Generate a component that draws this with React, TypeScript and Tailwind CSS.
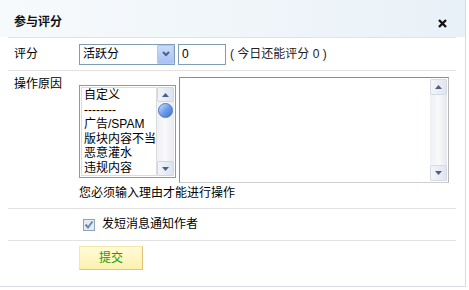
import React from "react";

const font = { fontFamily: '"Liberation Sans", "Noto Sans CJK SC", sans-serif' };

const reasons = ["自定义", "--------", "广告/SPAM", "版块内容不当", "恶意灌水", "违规内容"];

const ArrowUp = () => (
  <svg width="7" height="4" viewBox="0 0 7 4">
    <path d="M0 4 L3.5 0 L7 4 Z" fill="#4d6185" />
  </svg>
);

const ArrowDown = () => (
  <svg width="7" height="4" viewBox="0 0 7 4">
    <path d="M0 0 L3.5 4 L7 0 Z" fill="#4d6185" />
  </svg>
);

const App = () => {
  return (
    <div className="w-[469px] h-[290px] bg-white text-[12px] leading-[15px] text-black" style={font}>
      <div className="w-[466px] h-[287px] border-r border-b border-[#d3dbe4] flex flex-col">
        {/* Header */}
        <div className="h-[37px] flex items-start justify-between pl-[14px] pr-[18px] pt-[15px] bg-gradient-to-r from-[#f7fafc] to-[#e9f1f8]">
          <span className="font-bold text-[12px] text-[#111]">参与评分</span>
          <svg width="9" height="9" viewBox="0 0 9 9" className="mt-[4px]">
            <path d="M1 1 L8 8 M8 1 L1 8" stroke="#111" strokeWidth="2.4" />
          </svg>
        </div>

        <div className="mx-[8px] w-[448px] flex flex-col">
          {/* Score row */}
          <div className="h-[34px] flex items-center border-t border-[#e2e2e2] border-b border-b-[#e2e2e2]">
            <span className="w-[71px] pl-[6px]">评分</span>
            <div className="w-[96px] h-[21px] border border-[#7f9db9] flex items-center justify-between bg-white">
              <span className="pl-[3px]">活跃分</span>
              <div className="w-[17px] h-[19px] bg-gradient-to-b from-[#c9dafc] to-[#a9c1f2] border border-[#b3c7f3] flex items-center justify-center rounded-[1px]">
                <svg width="8" height="6" viewBox="0 0 8 6">
                  <path d="M1 1 L4 4 L7 1" stroke="#4d6185" strokeWidth="2" fill="none" />
                </svg>
              </div>
            </div>
            <div className="ml-[3px] w-[48px] h-[21px] border border-[#7f9db9] pl-[3px] flex items-center">0</div>
            <span className="ml-[4px] text-[#222]">( 今日还能评分 0 )</span>
          </div>

          {/* Reason row */}
          <div className="h-[138px] flex border-b border-[#e2e2e2]">
            <span className="w-[71px] pl-[6px] pt-[6px]">操作原因</span>
            <div className="flex flex-col">
              <div className="flex items-start">
                <div className="mt-[14px] w-[97px] h-[93px] border border-[#7f9db9] p-[1px] flex">
                  <div className="flex-1 border border-[#dcdcdc] flex flex-col pl-[2px] overflow-hidden">
                    {reasons.map((r) => (
                      <span key={r} className="whitespace-nowrap leading-[14.5px]">{r}</span>
                    ))}
                  </div>
                  <div className="w-[17px] flex flex-col bg-gradient-to-r from-[#eef0f4] via-[#f9f9fb] to-[#e8eaf0]">
                    <div className="h-[15px] border border-[#cfd6e6] rounded-[2px] flex items-center justify-center bg-gradient-to-r from-[#f2f4fa] to-[#dde3f0]">
                      <ArrowUp />
                    </div>
                    <div className="h-[15px] w-[15px] mx-auto mt-[1px] rounded-full bg-gradient-to-br from-[#cfe0fb] via-[#6f9ee8] to-[#3c6fc8] border border-[#4a77c5]" />
                    <div className="flex-1" />
                    <div className="h-[15px] border border-[#cfd6e6] rounded-[2px] flex items-center justify-center bg-gradient-to-r from-[#f2f4fa] to-[#dde3f0]">
                      <ArrowDown />
                    </div>
                  </div>
                </div>
                <div className="ml-[3px] mt-[6px] w-[270px] h-[106px] border border-[#8c8c8c] border-r-[#b8b8b8] border-b-[#cfcfcf] bg-white flex justify-end p-[1px]">
                  <div className="w-[17px] flex flex-col bg-gradient-to-r from-[#eef0f4] via-[#f9f9fb] to-[#e6e8ee]">
                    <div className="h-[16px] border border-[#d5dbe6] rounded-[2px] flex items-center justify-center bg-gradient-to-r from-[#f4f5fa] to-[#e1e5ee]">
                      <ArrowUp />
                    </div>
                    <div className="flex-1" />
                    <div className="h-[16px] border border-[#d5dbe6] rounded-[2px] flex items-center justify-center bg-gradient-to-r from-[#f4f5fa] to-[#e1e5ee]">
                      <ArrowDown />
                    </div>
                  </div>
                </div>
              </div>
              <span className="mt-[3px]">您必须输入理由才能进行操作</span>
            </div>
          </div>

          {/* Notify row */}
          <div className="h-[32px] flex items-center border-b border-[#e2e2e2] pl-[75px]">
            <svg width="12" height="12" viewBox="0 0 12 12">
              <rect x="0.5" y="0.5" width="11" height="11" fill="#e6ebf2" stroke="#8ea3bd" />
              <path d="M2.5 5.5 L5 8.5 L9.5 2.5" stroke="#6f86a6" strokeWidth="2" fill="none" />
            </svg>
            <span className="ml-[7px]">发短消息通知作者</span>
          </div>

          {/* Submit */}
          <div className="pl-[71px] pt-[5px]">
            <button className="w-[64px] h-[24px] bg-gradient-to-b from-[#fffbd8] to-[#fdf1ae] border border-[#f5e7a8] border-r-[#e3c279] border-b-[#e3c279] text-[#22980e] text-[12px]">
              提交
            </button>
          </div>
        </div>
      </div>
    </div>
  );
};

export default App;
